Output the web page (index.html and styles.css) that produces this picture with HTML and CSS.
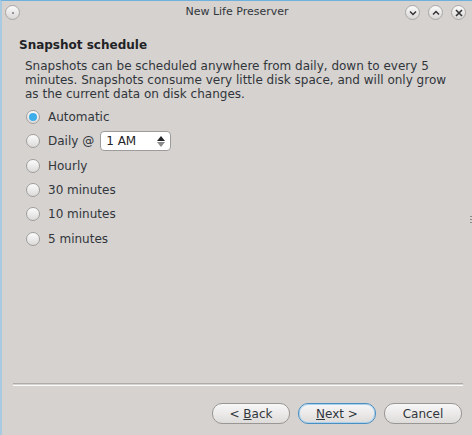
FILE: index.html
```html
<!DOCTYPE html>
<html>
<head>
<meta charset="utf-8">
<link rel="stylesheet" href="styles.css">
</head>
<body>
<div class="window">
  <div class="titlebar">
    <span class="tb-btn tb-menu"><span class="dot"></span></span>
    <span class="title">New Life Preserver</span>
    <span class="tb-right">
      <span class="tb-btn"><svg width="8" height="6" viewBox="0 0 8 6"><path d="M1 1.5 L4 4.5 L7 1.5" fill="none" stroke="#333" stroke-width="1.5"/></svg></span>
      <span class="tb-btn"><svg width="8" height="6" viewBox="0 0 8 6"><path d="M1 4.5 L4 1.5 L7 4.5" fill="none" stroke="#333" stroke-width="1.5"/></svg></span>
      <span class="tb-btn"><svg width="8" height="8" viewBox="0 0 8 8"><path d="M1 1 L7 7 M7 1 L1 7" fill="none" stroke="#333" stroke-width="1.6"/></svg></span>
    </span>
  </div>
  <div class="content">
    <h1 class="heading">Snapshot schedule</h1>
    <p class="desc">Snapshots can be scheduled anywhere from daily, down to every 5 minutes. Snapshots consume very little disk space, and will only grow as the current data on disk changes.</p>
    <div class="options">
      <div class="opt"><span class="radio checked"></span><span>Automatic</span></div>
      <div class="opt"><span class="radio"></span><span>Daily @</span>
        <span class="spin"><span class="spin-val">1 AM</span>
          <span class="spin-arrows"><span class="up"></span><span class="down"></span></span>
        </span>
      </div>
      <div class="opt"><span class="radio"></span><span>Hourly</span></div>
      <div class="opt"><span class="radio"></span><span>30 minutes</span></div>
      <div class="opt"><span class="radio"></span><span>10 minutes</span></div>
      <div class="opt"><span class="radio"></span><span>5 minutes</span></div>
    </div>
    <div class="spacer"></div>
    <div class="sep"></div>
    <div class="buttons">
      <button class="btn">&lt; <u>B</u>ack</button>
      <button class="btn focus"><u>N</u>ext &gt;</button>
      <button class="btn">Cancel</button>
    </div>
  </div>
  <div class="grip"><i></i><i></i><i></i></div>
</div>
</body>
</html>
```
FILE: styles.css
```css
html, body {
  margin: 0;
  padding: 0;
}
body {
  width: 472px;
  height: 435px;
  overflow: hidden;
  font-family: "DejaVu Sans", sans-serif;
  font-size: 12px;
  color: #31363b;
  background: #d6d2d0;
}
.window {
  position: relative;
  box-sizing: border-box;
  width: 472px;
  height: 435px;
  display: flex;
  flex-direction: column;
  border-top: 1px solid #6fb1dd;
  border-left: 2px solid #a9cbe2;
  background: #d6d2d0;
}
.titlebar {
  height: 21px;
  display: flex;
  align-items: center;
  position: relative;
  padding: 0 0 0 3px;
}
.title {
  position: absolute;
  left: 0;
  right: 0;
  text-align: center;
  top: 4px;
  font-size: 11px;
  color: #31363b;
  pointer-events: none;
}
.tb-btn {
  width: 13px;
  height: 13px;
  border-radius: 50%;
  border: 1px solid #a8a6a4;
  background: linear-gradient(#fbfbfb, #d9d7d6);
  display: inline-flex;
  align-items: center;
  justify-content: center;
  box-sizing: content-box;
}
.tb-menu { margin-top: 2px; }
.dot {
  width: 2px;
  height: 2px;
  border-radius: 50%;
  background: #777;
}
.tb-right {
  margin-left: auto;
  display: flex;
  gap: 8px;
  padding-right: 6px;
  margin-top: 2px;
}
.content {
  flex: 1;
  display: flex;
  flex-direction: column;
  padding: 16px 9px 11px 17px;
}
.heading {
  margin: 0;
  font-size: 12px;
  font-weight: bold;
  line-height: 15px;
  color: #1f2326;
}
.desc {
  margin: 6px 0 0 6px;
  line-height: 14px;
  width: 428px;
}
.options {
  margin: 4px 0 0 7px;
  display: flex;
  flex-direction: column;
}
.opt {
  height: 24.3px;
  display: flex;
  align-items: center;
  gap: 8px;
}
.radio {
  width: 12px;
  height: 12px;
  border-radius: 50%;
  border: 1px solid #a19f9d;
  background: linear-gradient(#fcfcfc, #dcdad9);
  display: inline-flex;
  align-items: center;
  justify-content: center;
  flex: none;
}
.radio.checked::after {
  content: "";
  width: 8px;
  height: 8px;
  border-radius: 50%;
  background: #3daee9;
}
.spin {
  margin-left: -2px;
  width: 64px;
  height: 18px;
  border: 1px solid #9e9c9a;
  border-radius: 4px;
  background: #fff;
  display: flex;
  align-items: center;
  padding-left: 5px;
  box-sizing: content-box;
}
.spin-val { flex: 1; color: #1f2326; }
.spin-arrows {
  display: flex;
  flex-direction: column;
  gap: 1px;
  padding-right: 5px;
}
.up {
  width: 0; height: 0;
  border-left: 4px solid transparent;
  border-right: 4px solid transparent;
  border-bottom: 5px solid #232629;
}
.down {
  width: 0; height: 0;
  border-left: 4px solid transparent;
  border-right: 4px solid transparent;
  border-top: 5px solid #8a8a8a;
}
.spacer { flex: 1; }
.sep {
  margin-left: -6px;
  height: 1px;
  border-top: 1px solid #b0aba8;
  border-bottom: 1px solid #fbfafa;
}
.buttons {
  display: flex;
  justify-content: flex-end;
  gap: 8px;
  margin-top: 17px;
  padding-right: 1px;
}
.btn {
  width: 78px;
  height: 21px;
  border-radius: 10px;
  border: 1px solid #999693;
  background: linear-gradient(#f8f7f7, #dedcdb);
  font-family: "DejaVu Sans", sans-serif;
  font-size: 12px;
  color: #31363b;
  padding: 0;
}
.btn.focus {
  border-color: #4a8fbf;
  box-shadow: inset 0 0 0 1px #aad2ee;
}
.grip {
  position: absolute;
  right: 0;
  top: 215px;
  display: flex;
  flex-direction: column;
  gap: 2px;
}
.grip i {
  display: block;
  width: 2px;
  height: 1px;
  background: #8d8a88;
}
```
